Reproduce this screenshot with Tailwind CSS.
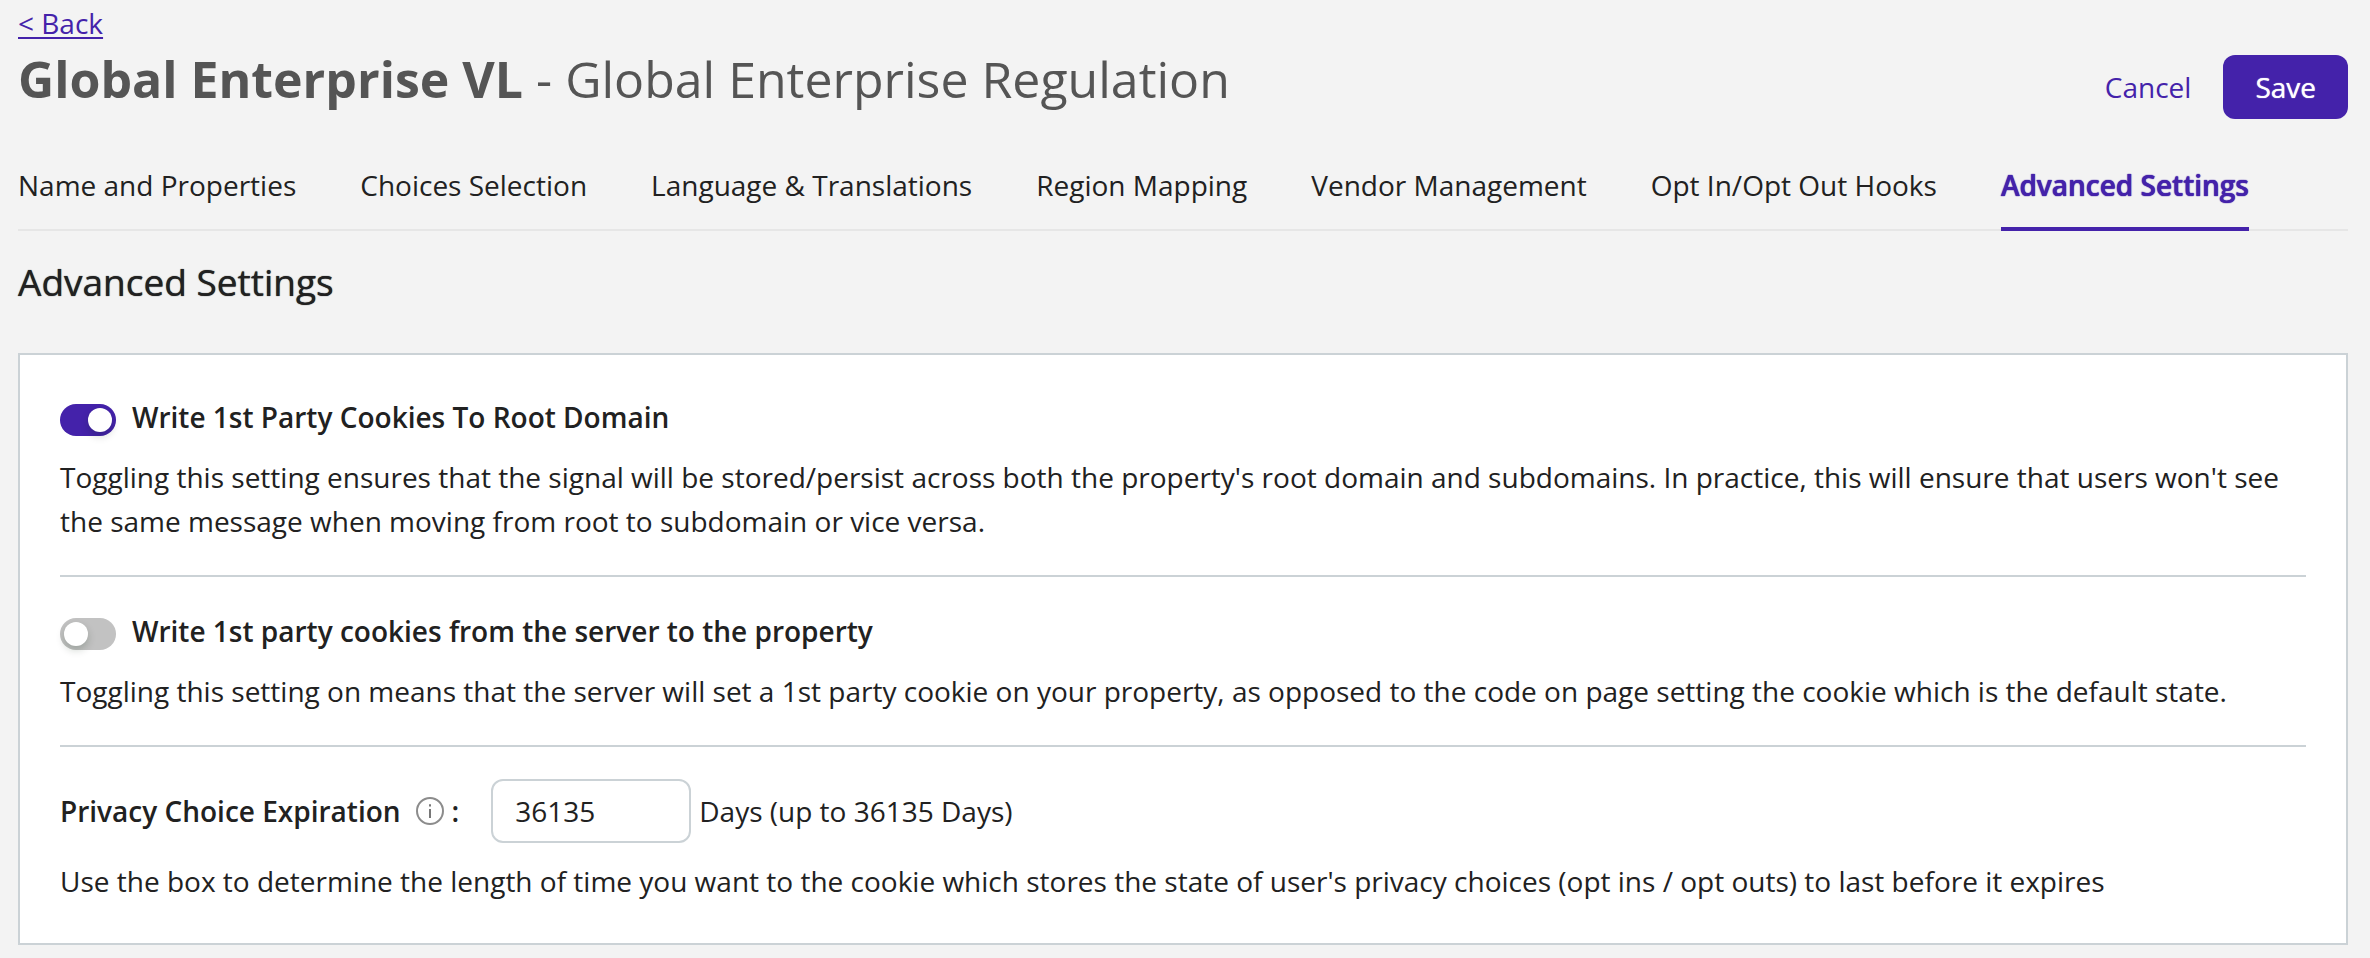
<!DOCTYPE html>
<html lang="en">
<head>
<meta charset="utf-8">
<title>Advanced Settings</title>
<script src="https://cdn.jsdelivr.net/npm/@tailwindcss/browser@4"></script>
</head>
<body class="min-h-screen bg-[#f3f3f3] font-['Open_Sans','Noto_Sans',sans-serif] text-[28px] leading-[44px] text-[#212121]">
<div class="pt-1 pr-[22px] pb-3 pl-[18px]">
  <header class="flex items-end justify-between">
    <div class="pb-1">
      <a href="#" class="block w-fit leading-[39px] text-[#4422aa] underline decoration-2 underline-offset-3">&lt; Back</a>
      <h1 class="text-[50px] leading-[72px] text-[#555555]"><strong class="font-bold">Global Enterprise VL</strong> - Global Enterprise Regulation</h1>
    </div>
    <div class="flex items-center">
      <button type="button" class="h-16 px-8 text-[#4422aa]">Cancel</button>
      <button type="button" class="h-16 rounded-xl bg-[#4422aa] px-8 text-white [text-shadow:0_0_1px_currentColor]">Save</button>
    </div>
  </header>

  <nav class="mt-11 flex gap-16 shadow-[inset_0_-2px_#e6e6e6]">
    <a href="#" class="pb-6">Name and Properties</a>
    <a href="#" class="pb-6">Choices Selection</a>
    <a href="#" class="pb-6">Language &amp; Translations</a>
    <a href="#" class="pb-6">Region Mapping</a>
    <a href="#" class="pb-6">Vendor Management</a>
    <a href="#" class="pb-6">Opt In/Opt Out Hooks</a>
    <a href="#" aria-current="page" class="border-b-4 border-[#4422aa] pb-5 font-semibold text-[#4422aa] [text-shadow:0_0_1px_currentColor,0_0_1px_currentColor]">Advanced Settings</a>
  </nav>

  <main>
    <h2 class="mt-6 text-[37px] leading-[54px] [text-shadow:0_0_1px_currentColor]">Advanced Settings</h2>
    <div class="mt-11 divide-y-2 divide-[#cbd2d6] border-2 border-[#cbd2d6] bg-white px-10 py-2">
      <section class="py-8">
        <label class="flex w-fit gap-4 font-semibold">
          <input type="checkbox" role="switch" checked class="mt-[9px] h-8 w-14 shrink-0 appearance-none rounded-full bg-[#c2c2c2] p-1 before:block before:size-6 before:rounded-full before:bg-white before:shadow-[0_4px_8px_rgba(0,35,11,0.2)] checked:bg-[#4422aa] checked:before:ml-6">
          Write 1st Party Cookies To Root Domain
        </label>
        <p class="mt-4">Toggling this setting ensures that the signal will be stored/persist across both the property's root domain and subdomains. In practice, this will ensure that users won't see the same message when moving from root to subdomain or vice versa.</p>
      </section>
      <section class="py-8">
        <label class="flex w-fit gap-4 font-semibold">
          <input type="checkbox" role="switch" class="mt-[9px] h-8 w-14 shrink-0 appearance-none rounded-full bg-[#c2c2c2] p-1 before:block before:size-6 before:rounded-full before:bg-white before:shadow-[0_4px_8px_rgba(0,35,11,0.2)] checked:bg-[#4422aa] checked:before:ml-6">
          Write 1st party cookies from the server to the property
        </label>
        <p class="mt-4">Toggling this setting on means that the server will set a 1st party cookie on your property, as opposed to the code on page setting the cookie which is the default state.</p>
      </section>
      <section class="py-8">
        <div class="flex items-center gap-2">
          <label for="expiration" class="mr-6 flex items-center font-semibold">
            Privacy Choice Expiration
            <svg class="mr-2 ml-[15px] size-7" viewBox="0 0 28 28" fill="none" aria-hidden="true">
              <circle cx="14" cy="14" r="13" stroke="#8c8c8c" stroke-width="2"/>
              <path d="M14 12v9M14 7.2v2.4" stroke="#777777" stroke-width="2"/>
            </svg>:
          </label>
          <input id="expiration" type="text" inputmode="numeric" value="36135" class="h-16 w-[200px] rounded-xl border-2 border-[#cbd2d6] bg-white px-[22px]">
          <span>Days (up to 36135 Days)</span>
        </div>
        <p class="mt-4">Use the box to determine the length of time you want to the cookie which stores the state of user's privacy choices (opt ins / opt outs) to last before it expires</p>
      </section>
    </div>
  </main>
</div>
</body>
</html>
